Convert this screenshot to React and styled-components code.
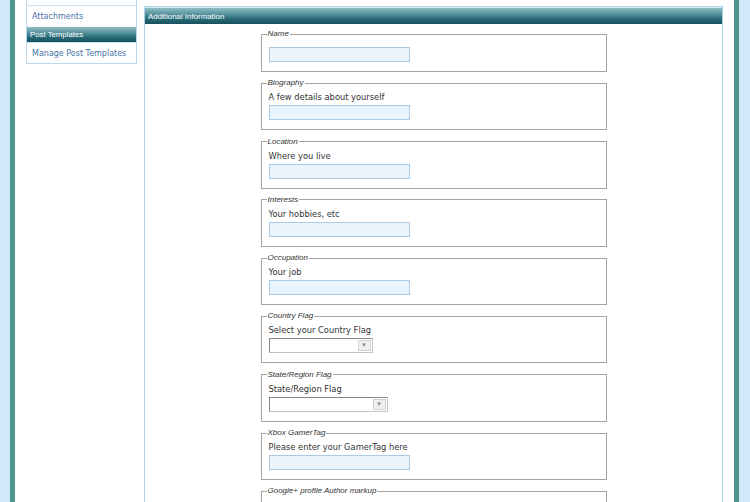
import React from "react";
import styled, { createGlobalStyle } from "styled-components";

const GlobalStyle = createGlobalStyle`
  html, body {
    margin: 0;
    padding: 0;
    background: #cfe8fa;
    font-family: "DejaVu Sans", Verdana, sans-serif;
  }
`

const fields = [
  { legend: "Name", kind: "input" },
  { legend: "Biography", desc: "A few details about yourself", kind: "input" },
  { legend: "Location", desc: "Where you live", kind: "input" },
  { legend: "Interests", desc: "Your hobbies, etc", kind: "input" },
  { legend: "Occupation", desc: "Your job", kind: "input" },
  { legend: "Country Flag", desc: "Select your Country Flag", kind: "select", width: 104 },
  { legend: "State/Region Flag", desc: "State/Region Flag", kind: "select", width: 119 },
  { legend: "Xbox GamerTag", desc: "Please enter your GamerTag here", kind: "input" },
  { legend: "Google+ profile Author markup", kind: "input" },
]

const App = () => {
  return (
    <>
      <GlobalStyle />
      <Frame>
        <Sidebar>
          <NavItem />
          <NavItem>Attachments</NavItem>
          <NavHeader>Post Templates</NavHeader>
          <NavItem>Manage Post Templates</NavItem>
        </Sidebar>
        <Panel>
          <PanelHeader>Additional Information</PanelHeader>
          <FieldList>
            {fields.map((f) => (
              <Fieldset key={f.legend}>
                <Legend>{f.legend}</Legend>
                {f.desc && <Desc>{f.desc}</Desc>}
                {f.kind === "input" ? (
                  <TextInput type="text" $first={!f.desc} />
                ) : (
                  <Select $width={f.width}>
                    <SelectButton>▾</SelectButton>
                  </Select>
                )}
              </Fieldset>
            ))}
          </FieldList>
        </Panel>
      </Frame>
    </>
  )
}

const Frame = styled.div`
  margin: 0 11px 0 10px;
  height: 502px;
  overflow: hidden;
  background: #fff;
  border-left: 5px solid #4e9791;
  border-right: 5px solid #4e9791;
  box-sizing: border-box;
  display: flex;
  align-items: flex-start;
  gap: 7px;
  padding: 0 11px;
`

const Sidebar = styled.div`
  width: 111px;
  flex-shrink: 0;
  margin-top: -17px;
  border: 1px solid #b9d8eb;
  border-top: none;
  box-sizing: border-box;
  background: #fff;
`

const NavItem = styled.div`
  height: 21px;
  border-top: 1px solid #c9e1f0;
  display: flex;
  align-items: center;
  padding-left: 5px;
  font-size: 8px;
  color: #4672a6;
  white-space: nowrap;
  &:first-child {
    border-top: none;
    height: 22px;
  }
  &:last-child {
    padding-top: 1px;
    height: 21px;
    box-sizing: border-box;
  }
`

const headerGradient = `
  background: linear-gradient(
    to bottom,
    #8fbcc3 0%,
    #5a97a2 35%,
    #2b6e7b 65%,
    #17505e 100%
  );
`

const NavHeader = styled.div`
  height: 15px;
  ${headerGradient}
  color: #fff;
  font-family: "Liberation Sans", Tahoma, sans-serif;
  font-size: 7.8px;
  display: flex;
  align-items: center;
  padding-left: 3px;
  white-space: nowrap;
`

const Panel = styled.div`
  flex: 1;
  margin-top: 6px;
  border: 1px solid #acd3e9;
  border-bottom: none;
  background: #fff;
  min-height: 600px;
`

const PanelHeader = styled.div`
  height: 16px;
  ${headerGradient}
  color: #fff;
  font-family: "Liberation Sans", Tahoma, sans-serif;
  font-size: 7.9px;
  display: flex;
  align-items: center;
  padding-left: 3px;
  border-top: 1px solid #d9ecf2;
`

const FieldList = styled.div`
  display: flex;
  flex-direction: column;
  align-items: center;
  gap: 6.3px;
  padding-top: 5px;
`

const Fieldset = styled.fieldset`
  width: 346px;
  box-sizing: border-box;
  margin: 0;
  padding: 0 7px 9px 7px;
  border: 1px solid #a3a3a3;
  display: flex;
  flex-direction: column;
  align-items: flex-start;
`

const Legend = styled.legend`
  padding: 0 1px;
  margin-left: -2px;
  font-family: "Liberation Sans", Tahoma, sans-serif;
  font-style: italic;
  font-size: 8px;
  line-height: 10px;
  color: #333;
`

const Desc = styled.div`
  margin-top: 3px;
  font-size: 8.3px;
  line-height: 12px;
  color: #333;
`

const TextInput = styled.input`
  box-sizing: border-box;
  width: 141px;
  height: 15px;
  margin: ${(p) => (p.$first ? "8px" : "2px")} 0 0 0;
  padding: 0;
  border: 1px solid #abcae5;
  background: #eaf4fd;
`

const Select = styled.div`
  box-sizing: border-box;
  width: ${(p) => p.$width}px;
  height: 15px;
  margin-top: 2px;
  border: 1px solid #c4c4c4;
  border-top-color: #8a8a8a;
  border-left-color: #8a8a8a;
  background: #fff;
  display: flex;
  justify-content: flex-end;
  align-items: stretch;
  padding: 1px;
`

const SelectButton = styled.div`
  width: 11px;
  border: 1px solid #d2d2d2;
  background: #efefef;
  color: #8a8a8a;
  font-size: 7px;
  line-height: 1;
  display: flex;
  align-items: center;
  justify-content: center;
`

export default App
